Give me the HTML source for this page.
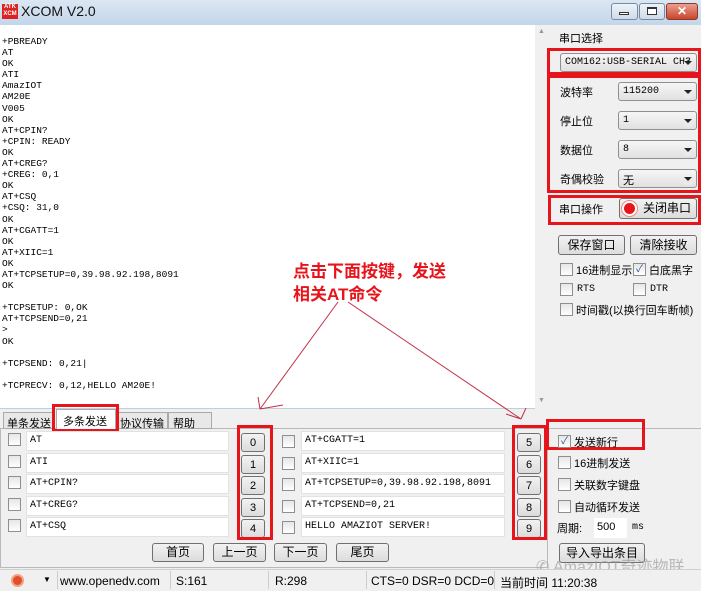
<!DOCTYPE html>
<html><head><meta charset="utf-8"><style>
*{margin:0;padding:0;box-sizing:border-box}
body{width:701px;height:589px;overflow:hidden;background:#f0f0f0;font-family:"Liberation Sans","Noto Sans CJK SC",sans-serif;font-size:11px;color:#000;position:relative}
.a{position:absolute;white-space:nowrap}
.mono{font-family:"Liberation Mono","Noto Sans CJK SC",monospace}
.rx{left:2px;top:36px;font-size:9.5px;line-height:11.1px;white-space:pre;font-family:"Liberation Mono",monospace}
.red{border:3px solid #e8141c}
.cb{width:13px;height:13px;border:1px solid #8f8f8f;background:linear-gradient(#e6e6e6,#fff)}
.tb{background:#fff;border:1px solid #e2e2e2;height:20px;font-family:"Liberation Mono",monospace;font-size:10px;padding:3px 0 0 3px;white-space:pre}
.btn{border:1px solid #707070;border-radius:3px;background:linear-gradient(#f2f2f2,#dcdcdc);text-align:center;font-size:12px}
.nb{width:24px;height:19px;font-size:11px;line-height:18px}
.combo{border:1px solid #8f8f8f;border-radius:3px;background:linear-gradient(#f6f6f6,#e1e1e1);height:19px;font-size:10px;padding:3px 0 0 4px;font-family:"Liberation Mono",monospace;overflow:hidden}
.combo:after{content:"";position:absolute;right:4px;top:7px;border:4px solid transparent;border-top:4px solid #222;background:#eaeaea}
.lb{font-size:11px}
</style></head><body>
<div class="a" style="left:0;top:0;width:701px;height:25px;background:linear-gradient(#dbe7f3,#c3d6ea)"></div>
<div class="a" style="left:2px;top:4px;width:16px;height:15px;background:#d22;color:#fff;font-size:6px;line-height:7px;text-align:center;font-weight:bold">ATK<br>XCM</div>
<div class="a" style="left:21px;top:3px;font-size:14px;color:#111">XCOM V2.0</div>
<div class="a" style="left:611px;top:3px;width:27px;height:17px;border:1px solid #7a8aa0;border-radius:3px;background:linear-gradient(#eef3f9,#cfdbe9)"></div>
<div class="a" style="left:619px;top:12px;width:10px;height:3px;border:1px solid #333;background:#fff"></div>
<div class="a" style="left:639px;top:3px;width:26px;height:17px;border:1px solid #7a8aa0;border-radius:3px;background:linear-gradient(#eef3f9,#cfdbe9)"></div>
<div class="a" style="left:647px;top:7px;width:10px;height:8px;border:1px solid #333;border-top-width:2px;background:#fff"></div>
<div class="a" style="left:666px;top:3px;width:32px;height:17px;border:1px solid #8a3a2a;border-radius:3px;background:linear-gradient(#e9a090,#c8452c);color:#fff;font-weight:bold;text-align:center;font-size:12px;line-height:15px">✕</div>
<div class="a" style="left:0;top:25px;width:548px;height:384px;background:#fff;border-bottom:1px solid #c0cfdf"></div>
<div class="a" style="left:535px;top:25px;width:13px;height:384px;background:#f0f0f0"></div>
<div class="a" style="left:538px;top:28px;font-size:7px;color:#999">▲</div>
<div class="a" style="left:538px;top:397px;font-size:7px;color:#999">▼</div>
<div class="a rx">+PBREADY
AT
OK
ATI
AmazIOT
AM20E
V005
OK
AT+CPIN?
+CPIN: READY
OK
AT+CREG?
+CREG: 0,1
OK
AT+CSQ
+CSQ: 31,0
OK
AT+CGATT=1
OK
AT+XIIC=1
OK
AT+TCPSETUP=0,39.98.92.198,8091
OK

+TCPSETUP: 0,OK
AT+TCPSEND=0,21
>
OK

+TCPSEND: 0,21|

+TCPRECV: 0,12,HELLO AM20E!</div>
<div class="a" style="left:293px;top:260px;color:#e8141c;font-weight:bold;font-size:17px;line-height:23px">点击下面按键，发送<br>相关AT命令</div>
<svg class="a" style="left:0;top:0" width="701" height="589"><g stroke="#c2304a" stroke-width="1" fill="none"><path d="M338 302L260 409M260 409L258 397M260 409L283 405M348 302L521 419M521 419L506 414M521 419L526 408"/></g></svg>
<div class="a lb" style="left:559px;top:30px">串口选择</div>
<div class="a red" style="left:547px;top:48px;width:154px;height:27px"></div>
<div class="a combo" style="left:560px;top:53px;width:137px">COM162:USB-SERIAL CH3</div>
<div class="a red" style="left:547px;top:75px;width:154px;height:118px"></div>
<div class="a lb" style="left:560px;top:84px">波特率</div><div class="a combo" style="left:618px;top:82px;width:79px">115200</div>
<div class="a lb" style="left:560px;top:113px">停止位</div><div class="a combo" style="left:618px;top:111px;width:79px">1</div>
<div class="a lb" style="left:560px;top:142px">数据位</div><div class="a combo" style="left:618px;top:140px;width:79px">8</div>
<div class="a lb" style="left:560px;top:171px">奇偶校验</div><div class="a combo" style="left:618px;top:169px;width:79px;font-size:11px;padding-top:2px">无</div>
<div class="a red" style="left:548px;top:195px;width:153px;height:30px"></div>
<div class="a lb" style="left:559px;top:201px">串口操作</div>
<div class="a btn" style="left:619px;top:198px;width:78px;height:21px;line-height:19px;padding-left:18px">关闭串口</div>
<div class="a" style="left:624px;top:203px;width:11px;height:11px;border-radius:50%;background:#e8141c;box-shadow:0 0 0 2px #fff,0 0 0 3px #e88"></div>
<div class="a btn" style="left:558px;top:235px;width:67px;height:20px;line-height:18px">保存窗口</div>
<div class="a btn" style="left:630px;top:235px;width:67px;height:20px;line-height:18px">清除接收</div>
<div class="a cb" style="left:560px;top:263px"></div><div class="a" style="left:576px;top:262px">16进制显示</div>
<div class="a cb" style="left:633px;top:263px;font-size:10px;line-height:11px;color:#2a4fa0;text-align:center">✓</div><div class="a" style="left:649px;top:262px">白底黑字</div>
<div class="a cb" style="left:560px;top:283px"></div><div class="a mono" style="left:577px;top:284px;font-size:10px">RTS</div>
<div class="a cb" style="left:633px;top:283px"></div><div class="a mono" style="left:650px;top:284px;font-size:10px">DTR</div>
<div class="a cb" style="left:560px;top:303px"></div><div class="a" style="left:576px;top:302px">时间戳(以换行回车断帧)</div>
<div class="a" style="left:0;top:428px;width:548px;height:140px;border:1px solid #b9b9b9;background:#f0f0f0"></div>
<div class="a" style="left:3px;top:412px;width:52px;height:17px;border:1px solid #aaa;background:#e8e8e8;padding:2px 0 0 3px">单条发送</div>
<div class="a" style="left:56px;top:409px;width:60px;height:20px;border:1px solid #aaa;border-bottom:none;background:#fff;padding:3px 0 0 6px">多条发送</div>
<div class="a" style="left:116px;top:412px;width:52px;height:17px;border:1px solid #aaa;background:#e8e8e8;padding:2px 0 0 3px">协议传输</div>
<div class="a" style="left:168px;top:412px;width:44px;height:17px;border:1px solid #aaa;background:#e8e8e8;padding:2px 0 0 4px">帮助</div>
<div class="a red" style="left:52px;top:404px;width:67px;height:28px"></div>
<div class="a cb" style="left:8px;top:433px"></div><div class="a tb" style="left:26px;top:431px;width:203px">AT</div>
<div class="a cb" style="left:8px;top:455px"></div><div class="a tb" style="left:26px;top:453px;width:203px">ATI</div>
<div class="a cb" style="left:8px;top:476px"></div><div class="a tb" style="left:26px;top:474px;width:203px">AT+CPIN?</div>
<div class="a cb" style="left:8px;top:498px"></div><div class="a tb" style="left:26px;top:496px;width:203px">AT+CREG?</div>
<div class="a cb" style="left:8px;top:519px"></div><div class="a tb" style="left:26px;top:517px;width:203px">AT+CSQ</div>
<div class="a btn nb" style="left:241px;top:433px">0</div>
<div class="a btn nb" style="left:241px;top:455px">1</div>
<div class="a btn nb" style="left:241px;top:476px">2</div>
<div class="a btn nb" style="left:241px;top:498px">3</div>
<div class="a btn nb" style="left:241px;top:519px">4</div>
<div class="a red" style="left:237px;top:425px;width:36px;height:115px"></div>
<div class="a cb" style="left:282px;top:435px"></div><div class="a tb" style="left:301px;top:431px;width:204px">AT+CGATT=1</div>
<div class="a cb" style="left:282px;top:457px"></div><div class="a tb" style="left:301px;top:453px;width:204px">AT+XIIC=1</div>
<div class="a cb" style="left:282px;top:478px"></div><div class="a tb" style="left:301px;top:474px;width:204px">AT+TCPSETUP=0,39.98.92.198,8091</div>
<div class="a cb" style="left:282px;top:500px"></div><div class="a tb" style="left:301px;top:496px;width:204px">AT+TCPSEND=0,21</div>
<div class="a cb" style="left:282px;top:521px"></div><div class="a tb" style="left:301px;top:517px;width:204px">HELLO AMAZIOT SERVER!</div>
<div class="a btn nb" style="left:517px;top:433px">5</div>
<div class="a btn nb" style="left:517px;top:455px">6</div>
<div class="a btn nb" style="left:517px;top:476px">7</div>
<div class="a btn nb" style="left:517px;top:498px">8</div>
<div class="a btn nb" style="left:517px;top:519px">9</div>
<div class="a red" style="left:512px;top:425px;width:35px;height:115px"></div>
<div class="a btn" style="left:152px;top:543px;width:52px;height:19px;line-height:17px">首页</div>
<div class="a btn" style="left:213px;top:543px;width:53px;height:19px;line-height:17px">上一页</div>
<div class="a btn" style="left:274px;top:543px;width:53px;height:19px;line-height:17px">下一页</div>
<div class="a btn" style="left:336px;top:543px;width:53px;height:19px;line-height:17px">尾页</div>
<div class="a" style="left:549px;top:428px;width:152px;height:140px;border-top:1px solid #b9b9b9"></div>
<div class="a red" style="left:546px;top:419px;width:99px;height:31px"></div>
<div class="a cb" style="left:558px;top:435px;font-size:10px;line-height:11px;color:#2a4fa0;text-align:center">✓</div><div class="a" style="left:574px;top:434px">发送新行</div>
<div class="a cb" style="left:558px;top:456px"></div><div class="a" style="left:574px;top:455px">16进制发送</div>
<div class="a cb" style="left:558px;top:478px"></div><div class="a" style="left:574px;top:477px">关联数字键盘</div>
<div class="a cb" style="left:558px;top:500px"></div><div class="a" style="left:574px;top:499px">自动循环发送</div>
<div class="a" style="left:557px;top:520px">周期:</div>
<div class="a" style="left:594px;top:518px;width:33px;height:20px;background:#fff;font-size:11px;padding:3px 0 0 3px">500</div>
<div class="a mono" style="left:632px;top:522px;font-size:10px">ms</div>
<div class="a btn" style="left:559px;top:543px;width:86px;height:20px;line-height:18px">导入导出条目</div>
<div class="a" style="left:536px;top:553px;font-size:16px;color:rgba(160,160,160,.7)">✆ AmazIOT奇迹物联</div>
<div class="a" style="left:0;top:569px;width:701px;height:20px;background:#f0f0f0;border-top:1px solid #d0d0d0"></div>
<div class="a" style="left:11px;top:574px;width:13px;height:13px;border-radius:50%;background:#e0502a;border:2px solid #f4a080"></div>
<div class="a" style="left:43px;top:575px;font-size:8px">▼</div>
<div class="a" style="left:57px;top:571px;width:1px;height:18px;background:#ccc"></div>
<div class="a" style="left:60px;top:574px;font-size:12px">www.openedv.com</div>
<div class="a" style="left:170px;top:571px;width:1px;height:18px;background:#ccc"></div>
<div class="a" style="left:176px;top:574px;font-size:12px">S:161</div>
<div class="a" style="left:268px;top:571px;width:1px;height:18px;background:#ccc"></div>
<div class="a" style="left:275px;top:574px;font-size:12px">R:298</div>
<div class="a" style="left:366px;top:571px;width:1px;height:18px;background:#ccc"></div>
<div class="a" style="left:371px;top:574px;font-size:12px">CTS=0 DSR=0 DCD=0</div>
<div class="a" style="left:494px;top:571px;width:1px;height:18px;background:#ccc"></div>
<div class="a" style="left:500px;top:574px;font-size:12px">当前时间 11:20:38</div>
</body></html>
